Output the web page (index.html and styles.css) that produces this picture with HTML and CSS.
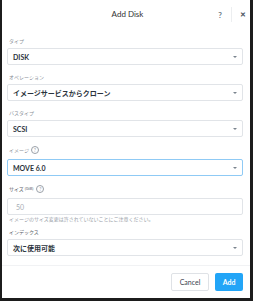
FILE: index.html
```html
<!DOCTYPE html>
<html lang="ja">
<head>
  <meta charset="UTF-8" />
  <meta name="viewport" content="width=device-width, initial-scale=1.0"/>
  <title>Add Disk</title>
  <link rel="stylesheet" href="styles.css">
</head>
<body>
  <div class="dialog">
    <div class="header">
      <span class="title">Add Disk</span>
      <div class="tools">
        <span class="help">?</span>
        <span class="sep"></span>
        <span class="close">&#x2715;</span>
      </div>
    </div>

    <div class="form">
      <div class="field">
        <label>タイプ</label>
        <div class="select"><span>DISK</span><i class="caret"></i></div>
      </div>

      <div class="field">
        <label>オペレーション</label>
        <div class="select"><span>イメージサービスからクローン</span><i class="caret"></i></div>
      </div>

      <div class="field">
        <label>バスタイプ</label>
        <div class="select"><span>SCSI</span><i class="caret"></i></div>
      </div>

      <div class="field">
        <label class="with-icon">イメージ <span class="q">?</span></label>
        <div class="select focus"><span>MOVE 6.0</span><i class="caret"></i></div>
      </div>

      <div class="field size">
        <label class="with-icon dark">サイズ <small>(GiB)</small> <span class="q">?</span></label>
        <div class="input disabled"><span>50</span></div>
        <p class="hint">イメージのサイズ変更は許されていないことにご注意ください。</p>
      </div>

      <div class="field">
        <label class="dark">インデックス</label>
        <div class="select"><span>次に使用可能</span><i class="caret"></i></div>
      </div>
    </div>

    <div class="footer">
      <button class="btn cancel">Cancel</button>
      <button class="btn add">Add</button>
    </div>
  </div>
</body>
</html>
```

FILE: styles.css
```css
html, body {
  margin: 0;
  padding: 0;
}
body {
  width: 253px;
  height: 301px;
  background: #1c1c1c;
  padding: 0 3px 3px 2px;
  box-sizing: border-box;
  font-family: Lato, "Noto Sans CJK JP", sans-serif;
}
.dialog {
  background: #fff;
  height: 298px;
  display: flex;
  flex-direction: column;
}
.header {
  height: 28px;
  flex-shrink: 0;
  display: flex;
  align-items: center;
  justify-content: center;
  position: relative;
}
.title {
  font-size: 8px;
  color: #333;
  margin-left: 3px;
}
.tools {
  position: absolute;
  right: 4px;
  top: 7px;
  height: 15px;
  display: flex;
  align-items: center;
}
.help {
  font-size: 8px;
  font-weight: bold;
  color: #6f7a86;
}
.sep {
  width: 1px;
  height: 15px;
  background: #eceef0;
  margin: 0 8px 0 9px;
}
.close {
  font-size: 7px;
  font-weight: bold;
  color: #4a5561;
}
.form {
  padding: 8px 7px 0 5px;
  flex: 1;
}
.field {
  margin-bottom: 7px;
}
.field.size {
  margin-bottom: 5px;
}
label {
  display: flex;
  align-items: center;
  height: 8px;
  margin-bottom: 4px;
  font-size: 5px;
  color: #8a9099;
  margin-left: 2px;
}
label.with-icon {
  height: 11px;
  margin-bottom: 4px;
  margin-top: 2px;
}
label small {
  font-size: 4px;
  margin: 0 1px;
}
label.dark {
  color: #5a6169;
}
.q {
  display: inline-flex;
  align-items: center;
  justify-content: center;
  width: 6px;
  height: 6px;
  border: 0.7px solid #9aa0a8;
  border-radius: 50%;
  font-size: 5px;
  color: #9aa0a8;
  margin-left: 2px;
}
.select, .input {
  height: 17px;
  box-sizing: border-box;
  border: 1px solid #e1e4e8;
  border-radius: 2px;
  display: flex;
  align-items: center;
  justify-content: space-between;
  padding: 0 5px 0 5px;
  font-size: 7px;
  font-weight: bold;
  color: #2b333c;
}
.select.focus {
  border-color: #8fcaf5;
}
.caret {
  width: 0;
  height: 0;
  border-left: 2px solid transparent;
  border-right: 2px solid transparent;
  border-top: 2px solid #7b848e;
}
.input.disabled {
  color: #a8aeb5;
  font-weight: normal;
  padding-left: 8px;
}
.hint {
  margin: 1px 0 0 2px;
  font-size: 5px;
  color: #9aa0a8;
  line-height: 6px;
}
.footer {
  border-top: 1px solid #f1f2f4;
  height: 32px;
  flex-shrink: 0;
  display: flex;
  align-items: center;
  justify-content: flex-end;
  padding: 0 7px 0 0;
  gap: 6px;
}
.btn {
  height: 18px;
  border-radius: 2px;
  font-family: Lato, sans-serif;
  font-size: 7px;
  padding: 0;
  cursor: pointer;
}
.cancel {
  width: 38px;
  background: #fff;
  border: 1px solid #dfe2e6;
  color: #3a434d;
}
.add {
  width: 28px;
  background: #22a5f7;
  border: none;
  color: #fff;
  font-weight: bold;
}
```
